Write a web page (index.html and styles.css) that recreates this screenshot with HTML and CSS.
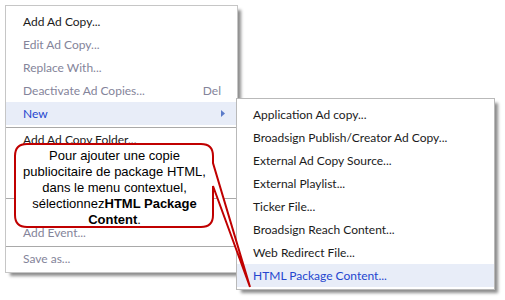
FILE: index.html
```html
<html lang="en">
<head>
<meta charset="utf-8">
<title>Ad Copy menu</title>
<link rel="stylesheet" href="styles.css">
</head>
<body>
<div class="stage">
    <div class="menu">
        <div class="item">Add Ad Copy...</div>
        <div class="item off">Edit Ad Copy...</div>
        <div class="item off">Replace With...</div>
        <div class="item off"><span>Deactivate Ad Copies...</span><span class="key">Del</span></div>
        <div class="item hot">
            <span>New</span>
            <svg class="arrow" width="4" height="7" viewBox="0 0 4 7"><path d="M0 0 L4 3.5 L0 7 Z" fill="#5b7bc9"/></svg>
            <div class="submenu">
                <div class="item">Application Ad copy...</div>
                <div class="item">Broadsign Publish/Creator Ad Copy...</div>
                <div class="item">External Ad Copy Source...</div>
                <div class="item">External Playlist...</div>
                <div class="item">Ticker File...</div>
                <div class="item">Broadsign Reach Content...</div>
                <div class="item">Web Redirect File...</div>
                <div class="item hot">HTML Package Content...</div>
            </div>
        </div>
        <div class="sep"></div>
        <div class="item">Add Ad Copy Folder...</div>
        <div class="item"></div>
        <div class="item blank"></div>
        <div class="sep"></div>
        <div class="item blank"></div>
        <div class="item off">Add Event...</div>
        <div class="sep"></div>
        <div class="item off">Save as...</div>
    </div>

    <!-- callout bubble over the menus -->
    <svg class="bubble" width="505" height="300" viewBox="0 0 505 300">
        <path d="M27 144 H201 Q213 144 213 156 V163 L250 287 L213 186 V215 Q213 227 201 227 H27 Q15 227 15 215 V156 Q15 144 27 144 Z"
              fill="#fff" stroke="#c00000" stroke-width="2"/>
    </svg>
    <div class="bubble-text">
        Pour ajouter une copie<br>
        publiocitaire de package HTML,<br>
        dans le menu contextuel,<br>
        sélectionnez<b>HTML Package</b><br>
        <b>Content</b>.
    </div>
</div>
</body>
</html>
```

FILE: styles.css
```css
    body{
        margin: 0;
        background: #fff;
    }
    .stage{
        position: relative;
        width: 505px;
        height: 300px;
        overflow: hidden;
    }
    /* context menu, windows look */
    .menu{
        margin: 5px 0 0 5px;
        width: 231px;
        padding: 4px 0 2px 0;
        border: 1px solid #c6c6c6;
        background: #fff;
        box-shadow: 4px 4px 3px -1px rgba(0,0,0,0.45);
        font-family: Lato, "Noto Sans", sans-serif;
        font-size: 12px;
        color: #1b1b1b;
    }
    .item{
        position: relative;
        display: flex;
        align-items: center;
        justify-content: space-between;
        height: 23px;
        padding: 0 15px 0 17px;
        margin-right: 1px;
    }
    .item.blank{
        height: 22px;
    }
    .item.off{
        color: #84849a;
    }
    .item.hot{
        background: #e8edf8;
        color: #2446cf;
    }
    .arrow{
        margin-right: -4px;
    }
    .sep{
        height: 1px;
        margin: 2px 1px 0 0;
        background: #a9a9a9;
    }
    .submenu{
        position: absolute;
        top: -4px;
        left: 100%;
        z-index: 2;
        width: 257px;
        padding: 4px 0 2px 0;
        border: 1px solid #b9b9b9;
        background: #fff;
        box-shadow: 4px 4px 3px -1px rgba(0,0,0,0.45);
        color: #1b1b1b;
    }
    .submenu .item{
        padding-left: 16px;
        margin-right: 0;
    }
    .bubble{
        position: absolute;
        left: 0;
        top: 0;
        z-index: 3;
    }
    .bubble-text{
        position: absolute;
        left: 15px;
        top: 148px;
        width: 199px;
        z-index: 4;
        text-align: center;
        font-family: "Liberation Sans", Arial, sans-serif;
        font-size: 13px;
        line-height: 16px;
        color: #000;
    }
```
